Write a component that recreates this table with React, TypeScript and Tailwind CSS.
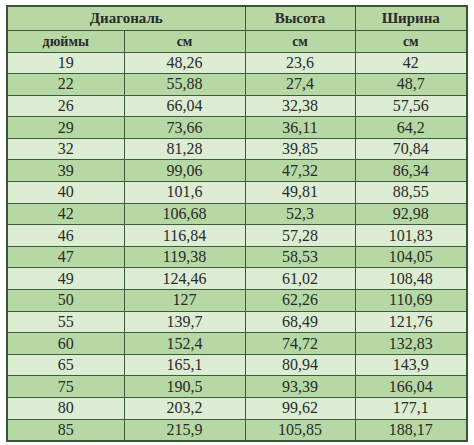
const rows: [string, string, string, string][] = [
  ['19', '48,26', '23,6', '42'],
  ['22', '55,88', '27,4', '48,7'],
  ['26', '66,04', '32,38', '57,56'],
  ['29', '73,66', '36,11', '64,2'],
  ['32', '81,28', '39,85', '70,84'],
  ['39', '99,06', '47,32', '86,34'],
  ['40', '101,6', '49,81', '88,55'],
  ['42', '106,68', '52,3', '92,98'],
  ['46', '116,84', '57,28', '101,83'],
  ['47', '119,38', '58,53', '104,05'],
  ['49', '124,46', '61,02', '108,48'],
  ['50', '127', '62,26', '110,69'],
  ['55', '139,7', '68,49', '121,76'],
  ['60', '152,4', '74,72', '132,83'],
  ['65', '165,1', '80,94', '143,9'],
  ['75', '190,5', '93,39', '166,04'],
  ['80', '203,2', '99,62', '177,1'],
  ['85', '215,9', '105,85', '188,17'],
];

const serif = "font-['Liberation_Serif','Times_New_Roman',serif]";
const cell = 'border border-[#3f5a3c] text-center p-0 ' + serif;

export default function App() {
  return (
    <div className={'w-[474px] h-[445px] bg-white pt-[5px] pl-[6px] ' + serif}>
      <table className={'border-collapse border-2 border-[#3a5437] w-[460px] table-fixed text-[#2a2a2a] ' + serif}>
        <colgroup>
          <col className="w-[117px]" />
          <col className="w-[121px]" />
          <col className="w-[110px]" />
          <col className="w-[112px]" />
        </colgroup>
        <thead>
          <tr className="h-[22px] bg-[#b7d7a5] text-[15px] font-bold">
            <th colSpan={2} className={cell}>Диагональ</th>
            <th className={cell}>Высота</th>
            <th className={cell}>Ширина</th>
          </tr>
          <tr className="h-[19px] bg-[#b7d7a5] text-[14px] font-bold">
            <th className={cell}>дюймы</th>
            <th className={cell}>см</th>
            <th className={cell}>см</th>
            <th className={cell}>см</th>
          </tr>
        </thead>
        <tbody className="text-[16px]">
          {rows.map((r, i) => (
            <tr key={r[0]} className={i % 2 === 0 ? 'h-[21.6px] bg-[#dcedd3]' : 'h-[21.6px] bg-[#b5d8a4]'}>
              {r.map((v, j) => (
                <td key={j} className={cell + ' leading-none'}>{v}</td>
              ))}
            </tr>
          ))}
        </tbody>
      </table>
    </div>
  );
}
